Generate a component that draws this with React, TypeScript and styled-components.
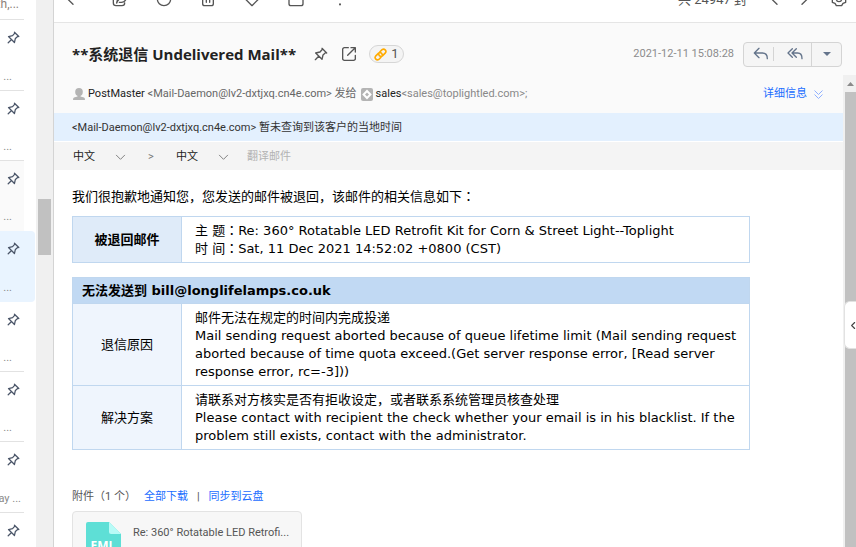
import React from "react";
import styled, { createGlobalStyle, css } from "styled-components";

const uiFont = `Roboto, "Noto Sans CJK SC", sans-serif`;
const titleFont = `"Open Sans", "Noto Sans CJK SC", sans-serif`;
const letterFont = `"DejaVu Sans", "Noto Sans CJK SC", sans-serif`;

const GlobalStyle = createGlobalStyle`
  *, *::before, *::after { box-sizing: border-box; }
  body { margin: 0; background: #fff; overflow: hidden; }
  button, select { font: inherit; color: inherit; }
  svg { display: block; flex: none; }
`;

const Shell = styled.div`
  display: flex;
  height: 100vh;
  overflow: hidden;
  font-family: ${uiFont};
  font-size: 11px;
  line-height: 16px;
  color: #333;
`;

/* ---------- message list ---------- */

const ListPane = styled.aside`
  display: flex;
  flex: none;
  border-right: 1px solid #d4d4d4;
`;

const MessageList = styled.ul`
  width: 36px;
  margin: 0;
  padding: 0;
  list-style: none;
`;

const ListPeek = styled.div`
  display: flex;
  justify-content: flex-end;
  align-items: flex-start;
  width: 24px;
  height: 20px;
  padding-right: 5px;
  border-bottom: 1px solid #e2e2e2;
  color: #8c8078;
  font-size: 12px;
  white-space: nowrap;

  span { margin-top: -4px; }
`;

const MessageRow = styled.li<{ $tone?: "selected" | "read"; $plain?: boolean }>`
  display: flex;
  flex-direction: column;
  justify-content: space-between;
  width: 24px;
  height: 70px;
  padding: 10px 3px 5px 0;
  border-bottom: 1px solid ${(p) => (p.$plain ? "transparent" : "#e2e2e2")};

  &:nth-child(3n + 1) { height: 71px; }

  ${(p) => p.$tone === "read" && css`background: #fafafa;`}
  ${(p) =>
    p.$tone === "selected" &&
    css`
      width: 35px;
      padding-right: 14px;
      border-radius: 0 4px 4px 0;
      background: #e9f4ff;
    `}
`;

const PinButton = styled.button`
  align-self: flex-end;
  padding: 0;
  border: 0;
  background: none;
  color: #4a5568;
`;

const Snippet = styled.span<{ $long?: boolean }>`
  display: flex;
  justify-content: flex-end;
  padding-right: ${(p) => (p.$long ? 0 : 9)}px;
  color: #8a8a8a;
  white-space: nowrap;
`;

const ListTrack = styled.div`
  width: 17px;
  padding: 199px 2px 0;
  background: #f0f0f0;
`;

const ListThumb = styled.div`
  height: 56px;
  background: #c1c1c1;
`;

/* ---------- reader ---------- */

const Reader = styled.main`
  position: relative;
  display: flex;
  flex: 1;
  flex-direction: column;
  min-width: 0;
`;

const Toolbar = styled.div`
  display: flex;
  flex: none;
  justify-content: space-between;
  align-items: flex-end;
  height: 23px;
  padding: 0 9px 14px 9px;
  border-bottom: 1px solid #e5e5e5;
  color: #555;
`;

const ToolGroup = styled.div<{ $gap: number }>`
  display: flex;
  align-items: center;
  gap: ${(p) => p.$gap}px;
  height: 18px;
`;

const IconButton = styled.button`
  padding: 0;
  border: 0;
  background: none;
  color: inherit;
`;

const BackButton = styled(IconButton)`
  margin-right: 5px;
`;

const SettingsButton = styled(IconButton)`
  margin-left: 6px;
`;

const MailCount = styled.span`
  margin-right: 7px;
  padding-top: 2px;
  font-size: 13px;
  white-space: nowrap;
`;

const SubjectBar = styled.header`
  display: flex;
  flex: none;
  align-items: center;
  height: 52px;
  padding: 10px 14px 0 18px;
  background: #fafafa;
  color: #555;
`;

const Subject = styled.h1`
  margin: 0 17px 0 0;
  font-family: ${titleFont};
  font-size: 15px;
  line-height: 24px;
  font-weight: 700;
  color: #222;
  white-space: nowrap;
`;

const SubjectActions = styled.div`
  display: flex;
  align-items: center;
  gap: 12px;
`;

const AttachBadge = styled.button`
  display: flex;
  align-items: center;
  gap: 4px;
  height: 18px;
  padding: 0 5px 0 4px;
  border: 1px solid #d6d6d6;
  border-radius: 9px;
  background: #f4f4f4;
  font-size: 13px;
  line-height: 16px;
`;

const SentAt = styled.time`
  margin-left: auto;
  margin-right: 9px;
  color: #8c8c8c;
  white-space: nowrap;
`;

const ReplyGroup = styled.div`
  display: flex;
  align-items: center;
  height: 25px;
  border: 1px solid #d4d4d4;
  border-radius: 4px;
  background: #f5f5f5;
  color: #64748b;
`;

const ReplyButton = styled.button<{ $w: number; $rule?: "short" | "full" }>`
  display: flex;
  justify-content: center;
  align-items: center;
  width: ${(p) => p.$w}px;
  height: ${(p) => (p.$rule === "short" ? 14 : 23)}px;
  padding: 0 0 0 ${(p) => (p.$rule ? 4 : 0)}px;
  border: 0;
  border-right: ${(p) => (p.$rule ? "1px solid #d4d4d4" : "0")};
  background: none;
`;

const ScrollPane = styled.div`
  display: flex;
  flex: 1;
  min-height: 0;
`;

const Content = styled.div`
  flex: 1;
  min-width: 0;
  overflow: hidden;
`;

const Addresses = styled.div`
  display: flex;
  align-items: center;
  height: 38px;
  padding: 0 20px 0 19px;
  background: #fafafa;
  color: #666;
  white-space: nowrap;

  b { font-weight: 400; color: #222; }
`;

const Address = styled.span<{ $soft?: boolean }>`
  margin: 0 4px 0 3px;
  color: ${(p) => (p.$soft ? "#888" : "#666")};
`;

const DetailsLink = styled.a`
  display: flex;
  align-items: center;
  gap: 7px;
  margin-left: auto;
  color: #1a6dff;
  text-decoration: none;
`;

const TimeNotice = styled.div`
  height: 28px;
  padding: 1px 18px 0;
  background: #e3f0fe;
  line-height: 28px;
  white-space: nowrap;
`;

const TranslateBar = styled.div`
  display: flex;
  align-items: center;
  height: 28px;
  margin-top: 1px;
  padding: 2px 0 0 19px;
  background: #f4f4f4;
`;

const LanguagePick = styled.label`
  display: flex;
  align-items: center;
  width: 53px;
  color: #222;

  select {
    width: 42px;
    padding: 0;
    border: 0;
    appearance: none;
    background: none;
  }
  svg { color: #777; }
`;

const Direction = styled.span`
  width: 50px;
  text-align: center;
  color: #777;
`;

const TranslateButton = styled.button`
  margin-left: 18px;
  padding: 0;
  border: 0;
  background: none;
  color: #b3b3b3;
`;

const Letter = styled.article`
  padding: 18px 18px 0;
  font-family: ${letterFont};
  font-size: 13px;
  line-height: 18px;
  color: #000;
`;

const Intro = styled.p`
  margin: 0 0 10px;
`;

const CenteredMark = styled.span`
  font-family: "DejaVu Sans", "Noto Sans CJK TC", sans-serif;
`;

const ReportTable = styled.table`
  width: 100%;
  max-width: 678px;
  margin-bottom: 14px;
  border-collapse: collapse;
  table-layout: fixed;

  th, td { border: 1px solid #c0d7ef; }
`;

const LabelColumn = styled.col`
  width: 109px;
`;

const LabelCell = styled.th<{ $strong?: boolean }>`
  width: 109px;
  padding: 0;
  background: ${(p) => (p.$strong ? "#dfebf9" : "#eff5fd")};
  font-weight: ${(p) => (p.$strong ? 700 : 400)};
  text-align: center;
`;

const TitleCell = styled.th`
  padding: 4px 9px 3px;
  background: #c1d9f3;
  text-align: left;
`;

const TextCell = styled.td`
  padding: 5px 4px 4px 13px;
`;

const Attachments = styled.section`
  padding: 25px 18px 0;
`;

const AttachmentHead = styled.div`
  display: flex;
  align-items: center;
  margin-bottom: 6px;
  color: #555;
  white-space: nowrap;

  a { color: #1a6dff; text-decoration: none; }
  i { margin: 0 9px; font-style: normal; }
`;

const AttachmentCount = styled.span`
  margin-right: 8px;
`;

const FileCard = styled.div`
  display: flex;
  width: 230px;
  height: 72px;
  padding: 10px 13px;
  border: 1px solid #e3e3e3;
  border-radius: 4px;
  background: #f7f7f7;
  color: #555;
`;

const FileName = styled.span`
  margin: 3px 0 0 12px;
  white-space: nowrap;
`;

const ScrollTrack = styled.div`
  flex: none;
  width: 13px;
  padding-left: 2px;
  background: #f0f0f0;
`;

const ScrollArrow = styled.div`
  display: flex;
  justify-content: center;
  align-items: center;
  height: 17px;
  color: #8a8a8a;
`;

const ScrollThumb = styled.div`
  height: 100%;
  background: #c1c1c1;
`;

const SideTab = styled.button`
  position: absolute;
  top: 301px;
  right: 0;
  display: flex;
  justify-content: center;
  align-items: center;
  width: 12px;
  height: 48px;
  padding: 0 0 0 6px;
  border: 1px solid #e2e2e2;
  border-right: 0;
  border-radius: 6px 0 0 6px;
  background: #fff;
  color: #444;
`;

/* ---------- icons ---------- */

type IconProps = { size?: number; w?: number; children?: React.ReactNode };

const Line = ({ size = 16, w = 2, children }: IconProps) => (
  <svg width={size} height={size} viewBox="0 0 24 24" fill="none" stroke="currentColor" strokeWidth={w} strokeLinecap="round" strokeLinejoin="round" aria-hidden="true">
    {children}
  </svg>
);

const PinIcon = ({ size = 15, w = 2 }: IconProps) => (
  <Line size={size} w={w}>
    <path d="M14.5 4.5l-4 4.5-6.5 1.500 9.500 9.500 1.500-6.500 4.500-4M13.500 3.500l7 7M8.500 15.500L3.500 20.500" />
  </Line>
);

const ChevronIcon = ({ dir, size = 16, w = 2 }: { dir: "left" | "right" | "down"; size?: number; w?: number }) => (
  <Line size={size} w={w}>
    <path d={dir === "left" ? "M15 4l-8 8 8 8" : dir === "right" ? "M9 4l8 8-8 8" : "M3 7l9 9 9-9"} />
  </Line>
);

const ReplyIcon = ({ all }: { all?: boolean }) => (
  <Line size={16} w={2}>
    {all ? (
      <path d="M8 4L1.500 10.500 8 17M14 4l-6.500 6.500L14 17M8 10.500h8c4 0 6.500 3 6.500 8.500" />
    ) : (
      <path d="M9 3.500L2 10.500l7 7M2.500 10.500H14c5 0 7.500 3.500 7.500 8.500" />
    )}
  </Line>
);

const toolIcons: { label: string; art: React.ReactNode }[] = [
  { label: "写信", art: <path d="M13 3H5a3 3 0 0 0-3 3v12a4 4 0 0 0 4 4h9a4 4 0 0 0 4-4M7 18l1.500-6 7-7M7 18c2-6 6-9 15-9-1 5-3 8-8 8H11" /> },
  { label: "稍后处理", art: <><circle cx="12" cy="12" r="10" /><path d="M12 5v7.500h5" /></> },
  { label: "删除", art: <path d="M2 5h20M4 5v14a3 3 0 0 0 3 3h10a3 3 0 0 0 3-3V5M9.500 10v7M14.500 10v7M9 2h6" /> },
  { label: "标签", art: <path d="M12 22L2.500 12.500V7a4 4 0 0 1 4-4h11a4 4 0 0 1 4 4v5.500z" /> },
  { label: "移动", art: <path d="M1.500 4h8l2 3h11v12a3 3 0 0 1-3 3h-15a3 3 0 0 1-3-3z" /> },
];

const PersonIcon = () => (
  <svg width="12" height="12" viewBox="0 0 12 12" fill="#b4b4b4" aria-hidden="true">
    <ellipse cx="6" cy="4" rx="3.800" ry="4" />
    <path d="M4.500 7h3v1.500l3.500 1q1 .4 1 2.500H0q0-2.100 1-2.500l3.500-1z" />
  </svg>
);

const ContactIcon = () => (
  <svg width="12" height="13" viewBox="0 0 12 13" aria-hidden="true">
    <rect width="12" height="13" rx="2" fill="#b4b4b4" />
    <path d="M6 1.500l4.800 5-4.800 5-4.800-5z" fill="#fff" />
    <path d="M6 4.500l2 2-2 2-2-2z" fill="#b4b4b4" />
  </svg>
);

const FileIcon = () => (
  <svg width="35" height="42" viewBox="0 0 35 42" role="img" aria-label="EML">
    <path d="M2 0h21l12 12v28a2 2 0 0 1-2 2H2a2 2 0 0 1-2-2V2a2 2 0 0 1 2-2z" fill="#5edfd6" />
    <path d="M23 0l12 12H25a2 2 0 0 1-2-2z" fill="#b8fbf7" />
    <text x="17" y="28" textAnchor="middle" fontFamily="Open Sans, sans-serif" fontWeight="700" fontSize="12" fill="#fff">EML</text>
  </svg>
);

/* ---------- page ---------- */

const rows: { text: string; tone?: "selected" | "read"; plain?: boolean; long?: boolean }[] = [
  { text: "..." },
  { text: "..." },
  { text: "...", tone: "read", plain: true },
  { text: "...", tone: "selected", plain: true },
  { text: "..." },
  { text: "..." },
  { text: "ay ...", long: true },
  { text: "" },
];

const Language = ({ label }: { label: string }) => (
  <LanguagePick>
    <select aria-label={label} defaultValue="zh">
      <option value="zh">中文</option>
      <option value="en">English</option>
    </select>
    <ChevronIcon dir="down" size={11} />
  </LanguagePick>
);

const Colon = () => <CenteredMark lang="zh-TW">：</CenteredMark>;

export default function App() {
  return (
    <>
      <GlobalStyle />
      <Shell lang="zh-CN">
        <ListPane>
          <div>
            <ListPeek><span>th,...</span></ListPeek>
            <MessageList>
              {rows.map((row, i) => (
                <MessageRow key={i} $tone={row.tone} $plain={row.plain}>
                  <PinButton aria-label="置顶"><PinIcon /></PinButton>
                  <Snippet $long={row.long}>{row.text}</Snippet>
                </MessageRow>
              ))}
            </MessageList>
          </div>
          <ListTrack><ListThumb /></ListTrack>
        </ListPane>

        <Reader>
          <Toolbar>
            <ToolGroup $gap={28}>
              <BackButton aria-label="返回"><ChevronIcon dir="left" /></BackButton>
              {toolIcons.map((t) => (
                <IconButton key={t.label} aria-label={t.label}><Line>{t.art}</Line></IconButton>
              ))}
              <IconButton aria-label="更多">
                <Line w={3}><path d="M12 4v.1M12 12v.1M12 20v.1" /></Line>
              </IconButton>
            </ToolGroup>
            <ToolGroup $gap={13}>
              <MailCount>共 24947 封</MailCount>
              <IconButton aria-label="上一封"><ChevronIcon dir="left" /></IconButton>
              <IconButton aria-label="下一封"><ChevronIcon dir="right" /></IconButton>
              <SettingsButton aria-label="设置">
                <Line><path d="M8 2h8l2 3.500 4 1.500v10l-4 1.500-2 3.500H8l-2-3.500L2 17V7l4-1.500z" /><circle cx="12" cy="12" r="4" /></Line>
              </SettingsButton>
            </ToolGroup>
          </Toolbar>

          <SubjectBar>
            <Subject>**系统退信 Undelivered Mail**</Subject>
            <SubjectActions>
              <IconButton aria-label="置顶"><PinIcon size={16} /></IconButton>
              <IconButton aria-label="新窗口打开">
                <Line><path d="M11 2.500H5A2.500 2.500 0 0 0 2.500 5v14A2.500 2.500 0 0 0 5 21.500h14a2.500 2.500 0 0 0 2.500-2.500v-5M15 2.500h6.500V9M21 3L10 14" /></Line>
              </IconButton>
              <AttachBadge aria-label="1 个附件">
                <svg width="13" height="13" viewBox="0 0 24 24" fill="none" stroke="#ffab00" strokeWidth="3" strokeLinecap="round" aria-hidden="true">
                  <path d="M11 7l4-4c4-3 9 2 6 6l-5 5c-3 3-7 1-7-2M13 17l-4 4c-4 3-9-2-6-6l5-5c3-3 7-1 7 2" />
                </svg>
                1
              </AttachBadge>
            </SubjectActions>
            <SentAt>2021-12-11 15:08:28</SentAt>
            <ReplyGroup>
              <ReplyButton $w={30} $rule="short" aria-label="回复"><ReplyIcon /></ReplyButton>
              <ReplyButton $w={38} $rule="full" aria-label="回复全部"><ReplyIcon all /></ReplyButton>
              <ReplyButton $w={29} aria-label="更多回复方式">
                <svg width="8" height="4" viewBox="0 0 8 4" fill="currentColor" aria-hidden="true"><path d="M0 0h8L4 4z" /></svg>
              </ReplyButton>
            </ReplyGroup>
          </SubjectBar>

          <ScrollPane>
            <Content>
              <Addresses>
                <PersonIcon />
                <Address><b>PostMaster</b> &lt;Mail-Daemon@lv2-dxtjxq.cn4e.com&gt; 发给</Address>
                <ContactIcon />
                <Address $soft><b>sales</b>&lt;sales@toplightled.com&gt;;</Address>
                <DetailsLink href="#details">
                  详细信息
                  <svg width="9" height="9" viewBox="0 0 9 9" fill="none" stroke="#8fb0ff" aria-hidden="true">
                    <path d="M.5 .5l4 4 4-4M.5 4.500l4 4 4-4" />
                  </svg>
                </DetailsLink>
              </Addresses>
              <TimeNotice>&lt;Mail-Daemon@lv2-dxtjxq.cn4e.com&gt; 暂未查询到该客户的当地时间</TimeNotice>
              <TranslateBar>
                <Language label="源语言" />
                <Direction>&gt;</Direction>
                <Language label="目标语言" />
                <TranslateButton>翻译邮件</TranslateButton>
              </TranslateBar>

              <Letter>
                <Intro>我们很抱歉地通知您，您发送的邮件被退回，该邮件的相关信息如下<Colon /></Intro>
                <ReportTable>
                  <tbody>
                    <tr>
                      <LabelCell scope="row" $strong>被退回邮件</LabelCell>
                      <TextCell>
                        主 题<Colon />Re: 360° Rotatable LED Retrofit Kit for Corn &amp; Street Light--Toplight
                        <br />
                        时 间<Colon />Sat, 11 Dec 2021 14:52:02 +0800 (CST)
                      </TextCell>
                    </tr>
                  </tbody>
                </ReportTable>
                <ReportTable>
                  <colgroup><LabelColumn /><col /></colgroup>
                  <thead>
                    <tr><TitleCell colSpan={2}>无法发送到 bill@longlifelamps.co.uk</TitleCell></tr>
                  </thead>
                  <tbody>
                    <tr>
                      <LabelCell scope="row">退信原因</LabelCell>
                      <TextCell>
                        邮件无法在规定的时间内完成投递
                        <br />
                        Mail sending request aborted because of queue lifetime limit (Mail sending request aborted because of time quota exceed.(Get server response error, [Read server response error, rc=-3]))
                      </TextCell>
                    </tr>
                    <tr>
                      <LabelCell scope="row">解决方案</LabelCell>
                      <TextCell>
                        请联系对方核实是否有拒收设定，或者联系系统管理员核查处理
                        <br />
                        Please contact with recipient the check whether your email is in his blacklist. If the problem still exists, contact with the administrator.
                      </TextCell>
                    </tr>
                  </tbody>
                </ReportTable>
              </Letter>

              <Attachments>
                <AttachmentHead>
                  <AttachmentCount>附件（1 个）</AttachmentCount>
                  <a href="#download">全部下载</a>
                  <i>|</i>
                  <a href="#sync">同步到云盘</a>
                </AttachmentHead>
                <FileCard>
                  <FileIcon />
                  <FileName>Re: 360° Rotatable LED Retrofi...</FileName>
                </FileCard>
              </Attachments>
            </Content>
            <ScrollTrack>
              <ScrollArrow>
                <svg width="7" height="4" viewBox="0 0 7 4" fill="currentColor" aria-hidden="true"><path d="M0 4h7L3.500 0z" /></svg>
              </ScrollArrow>
              <ScrollThumb />
            </ScrollTrack>
          </ScrollPane>

          <SideTab aria-label="展开侧栏"><ChevronIcon dir="left" size={9} w={3} /></SideTab>
        </Reader>
      </Shell>
    </>
  );
}
